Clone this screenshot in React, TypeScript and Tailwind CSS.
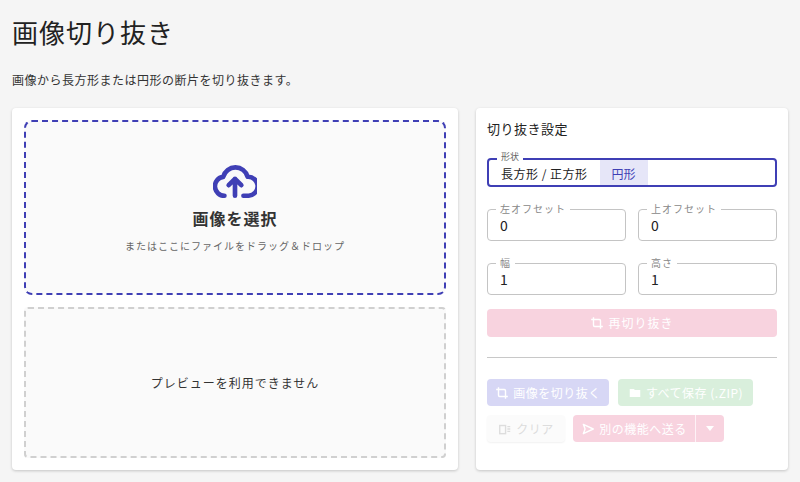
import React from "react";

const F = { fontFamily: '"Noto Sans CJK JP", "Noto Sans", sans-serif' };

function Field({ label, value }: { label: string; value: string }) {
  return (
    <div className="relative flex-1 h-[32px] rounded border border-[#c4c4c4] flex items-center px-[12px] text-[14px] text-[#222]">
      <span className="absolute -top-[8px] left-[8px] bg-white px-[4px] text-[10px] text-[#888] leading-[14px] tracking-[1px]">{label}</span>
      {value}
    </div>
  );
}

export default function App() {
  return (
    <div style={F} className="w-[800px] h-[482px] bg-[#f5f5f5] overflow-hidden px-[12px] pt-[14px]">
      <h1 className="text-[26px] leading-[36px] text-[#222] tracking-[1px]">画像切り抜き</h1>
      <p className="mt-[22px] text-[12px] leading-[16px] text-[#333] tracking-[0.5px]">画像から長方形または円形の断片を切り抜きます。</p>
      <div className="mt-[20px] flex gap-[18px]">
        <div className="w-[446px] h-[362px] bg-white rounded shadow-[0_1px_3px_rgba(0,0,0,0.2)] p-[12px] flex flex-col gap-[12px]">
          <div className="h-[175px] rounded-[8px] border-2 border-dashed border-[#3f3fb5] bg-[#fafafa] flex flex-col items-center justify-center">
            <svg width="44" height="38" viewBox="2 3 20 18" fill="none" stroke="#3f3fb5" strokeWidth="2.2" strokeLinecap="round" strokeLinejoin="round">
              <path d="M7 19a4.5 4.5 0 0 1-.6-8.96A6 6 0 0 1 18 10a4 4 0 0 1 .5 8.97H16" />
              <path d="M12 19v-8M9 14l3-3 3 3" />
            </svg>
            <div className="mt-[6px] text-[16px] font-bold text-[#333] tracking-[1px]">画像を選択</div>
            <div className="mt-[8px] text-[10px] text-[#666] tracking-[1px]">またはここにファイルをドラッグ＆ドロップ</div>
          </div>
          <div className="h-[151px] rounded border-2 border-dashed border-[#d0d0d0] bg-[#fafafa] flex items-center justify-center text-[12px] text-[#333] tracking-[1px]">
            プレビューを利用できません
          </div>
        </div>
        <div className="w-[312px] h-[362px] bg-white rounded shadow-[0_1px_3px_rgba(0,0,0,0.2)] px-[11px] pt-[12px]">
          <div className="text-[13px] text-[#222] leading-[18px] tracking-[0.5px]">切り抜き設定</div>
          <div className="relative mt-[20px] h-[29px] rounded border-2 border-[#3f3fb5] flex items-stretch text-[12px]">
            <span className="absolute -top-[9px] left-[8px] bg-white px-[4px] text-[9px] text-[#666] leading-[12px] z-10">形状</span>
            <div className="px-[12px] pt-[2px] flex items-center text-[#222] tracking-[0.5px]">長方形 / 正方形</div>
            <div className="px-[12px] pt-[2px] flex items-center bg-[#e6e6f8] text-[#3f3fb5]">円形</div>
          </div>
          <div className="mt-[22px] flex gap-[12px]"><Field label="左オフセット" value="0" /><Field label="上オフセット" value="0" /></div>
          <div className="mt-[22px] flex gap-[12px]"><Field label="幅" value="1" /><Field label="高さ" value="1" /></div>
          <div className="mt-[14px] h-[28px] rounded bg-[#f8d3df] flex items-center justify-center gap-[4px] text-[12px] text-white tracking-[1px]">
            <svg width="14" height="14" viewBox="0 0 24 24" fill="none" stroke="white" strokeWidth="2.4"><path d="M6 2v14a2 2 0 0 0 2 2h14M18 22V8a2 2 0 0 0-2-2H2" /></svg>
            再切り抜き
          </div>
          <div className="mt-[20px] border-t border-[#c8c8c8]" />
          <div className="mt-[21px] flex gap-[9px] text-[12px] text-white tracking-[0.5px]">
            <div className="h-[27px] w-[122px] rounded bg-[#d7d7f5] flex items-center justify-center gap-[4px]">
              <svg width="14" height="14" viewBox="0 0 24 24" fill="none" stroke="white" strokeWidth="2.4"><path d="M6 2v14a2 2 0 0 0 2 2h14M18 22V8a2 2 0 0 0-2-2H2" /></svg>
              画像を切り抜く
            </div>
            <div className="h-[27px] w-[135px] rounded bg-[#d9efdc] flex items-center justify-center gap-[4px]">
              <svg width="14" height="14" viewBox="0 0 24 24" fill="white"><path d="M3 5h7l2 2h9v12H3z" /></svg>
              すべて保存 (.ZIP)
            </div>
          </div>
          <div className="mt-[9px] flex gap-[8px] text-[12px] tracking-[0.5px]">
            <div className="h-[27px] w-[78px] rounded bg-[#fbfbfb] shadow-[0_1px_2px_rgba(0,0,0,0.06)] flex items-center justify-center gap-[4px] text-[#ddd]">
              <svg width="14" height="14" viewBox="0 0 24 24" fill="none" stroke="#ddd" strokeWidth="2.4"><rect x="3" y="6" width="10" height="14" /><path d="M16 8h5M16 12h5M16 16h5" /></svg>
              クリア
            </div>
            <div className="h-[27px] flex rounded bg-[#f8d3df] text-white overflow-hidden">
              <div className="w-[122px] flex items-center justify-center gap-[4px]">
                <svg width="14" height="14" viewBox="0 0 24 24" fill="none" stroke="white" strokeWidth="2.4" strokeLinejoin="round"><path d="M4 4l17 8-17 8 3-8z" /></svg>
                別の機能へ送る
              </div>
              <div className="w-px bg-white/70" />
              <div className="w-[28px] flex items-center justify-center">
                <svg width="8" height="5" viewBox="0 0 8 5" fill="white"><path d="M0 0h8L4 5z" /></svg>
              </div>
            </div>
          </div>
        </div>
      </div>
    </div>
  );
}
